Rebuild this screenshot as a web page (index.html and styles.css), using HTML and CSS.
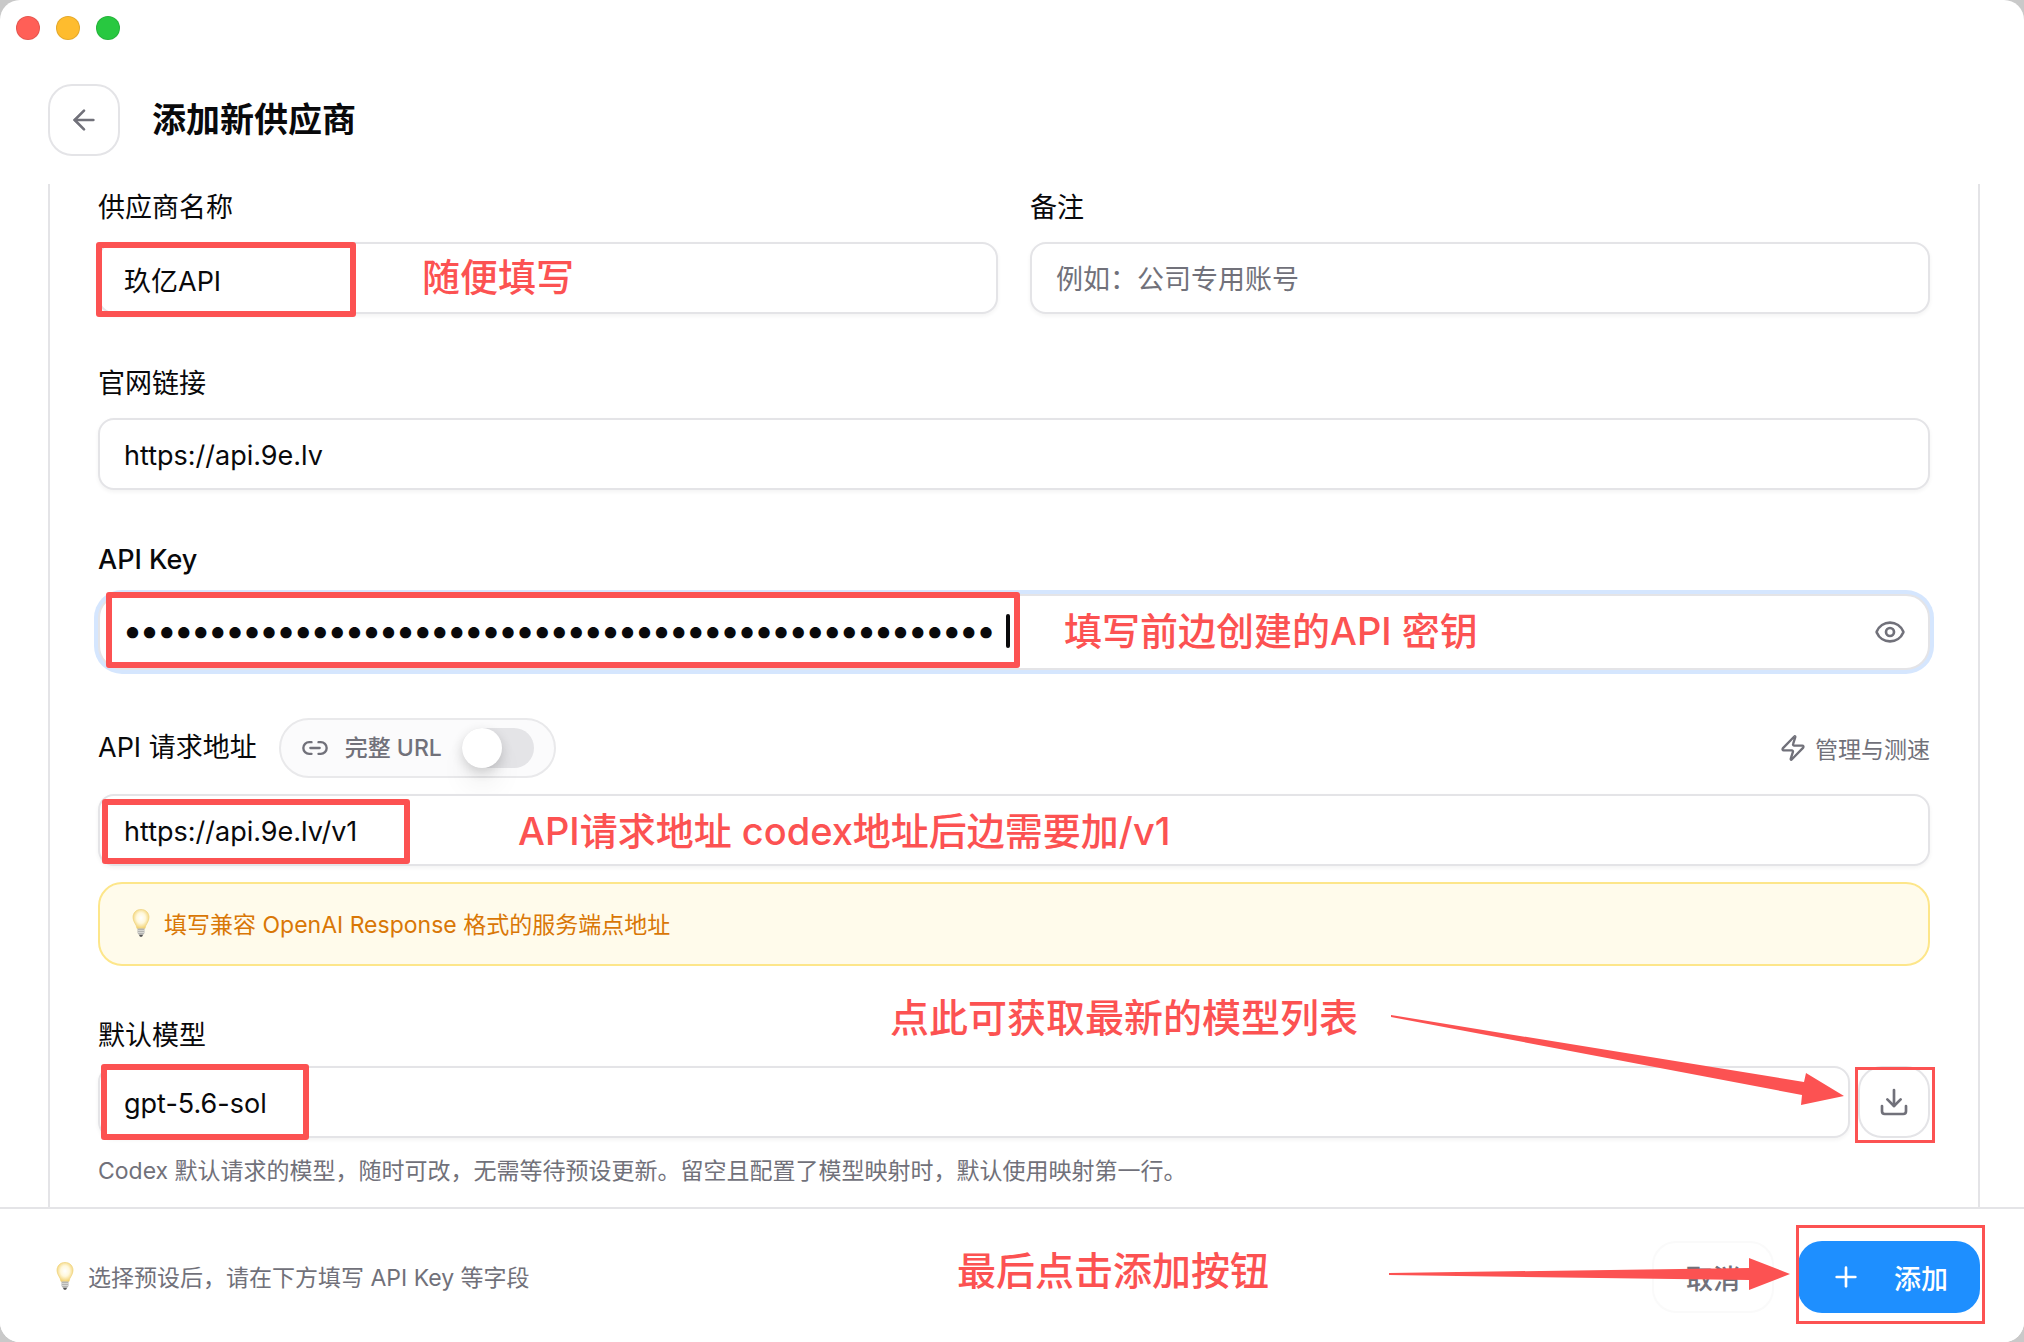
FILE: index.html
```
<!DOCTYPE html>
<html lang="zh-CN">
	<head>
		<meta charset="utf-8">
		<title>添加新供应商</title>
		<link rel="stylesheet" href="styles.css">
	</head>
	<body>
		<!-- 公用图标 -->
		<svg class="sprite" aria-hidden="true">
			<defs>
				<radialGradient id="glow" cx="50%" cy="45%" r="55%">
					<stop offset="0" stop-color="#ffffff"/>
					<stop offset="0.5" stop-color="#fff8dc"/>
					<stop offset="1" stop-color="#f3d272"/>
				</radialGradient>
			</defs>
			<symbol id="bulb" viewBox="0 0 18 28">
				<path d="M9 .5C4 .5 1 4 1 8.500C1 13 4.500 15 5 19.500H13C13.500 15 17 13 17 8.500C17 4 14 .5 9 .5Z" fill="url(#glow)" stroke="#f0d584" stroke-width=".8"/>
				<path d="M5.500 19.500h7v4.500l-1.500 2h-4l-1.500-2z" fill="#b4b4b2"/>
				<path d="M5.500 21.500h7M5.500 23.500h7" stroke="#dededb" stroke-width=".8"/>
				<path d="M7 26h4l-1 1.800h-2z" fill="#555"/>
			</symbol>
		</svg>
		<div class="window">
			<div class="titlebar">
				<span class="dot dot-red"></span>
				<span class="dot dot-yellow"></span>
				<span class="dot dot-green"></span>
			</div>
			<header class="header">
				<button type="button" class="btn-icon" aria-label="返回">
					<svg class="icon" viewBox="0 0 24 24"><path d="m12 19-7-7 7-7"/><path d="M19 12H5"/></svg>
				</button>
				<h1>添加新供应商</h1>
			</header>

			<form class="form" id="provider">
				<div class="row">
					<div class="field">
						<label for="name">供应商名称</label>
						<div class="control">
							<input type="text" id="name" value="玖亿API">
							<span class="mark mark-name"></span>
							<span class="note note-name">随便填写</span>
						</div>
					</div>
					<div class="field">
						<label for="remark">备注</label>
						<div class="control">
							<input type="text" id="remark" placeholder="例如：公司专用账号">
						</div>
					</div>
				</div>

				<div class="field">
					<label for="site">官网链接</label>
					<div class="control">
						<input type="text" id="site" value="https://api.9e.lv">
					</div>
				</div>

				<div class="field field-key">
					<label for="key">API Key</label>
					<div class="control">
						<input type="password" id="key" class="focus" value="123456789012345678901234567890123456789012345678901">
						<span class="caret"></span>
						<button type="button" class="btn-eye" aria-label="显示">
							<svg class="icon" viewBox="0 0 24 24"><path d="M2.062 12.348a1 1 0 0 1 0-.696 10.750 10.750 0 0 1 19.876 0 1 1 0 0 1 0 .696 10.750 10.750 0 0 1-19.876 0"/><circle cx="12" cy="12" r="3"/></svg>
						</button>
						<span class="mark mark-key"></span>
						<span class="note note-key">填写前边创建的API 密钥</span>
					</div>
				</div>

				<div class="field field-url">
					<div class="label-row">
						<label for="url">API 请求地址</label>
						<label class="pill" for="full">
							<svg class="icon icon-sm" viewBox="0 0 24 24"><path d="M9 17H7A5 5 0 0 1 7 7h2"/><path d="M15 7h2a5 5 0 1 1 0 10h-2"/><path d="M8 12h8"/></svg>
							完整 URL
							<input type="checkbox" id="full" class="switch">
						</label>
						<button type="button" class="btn-text">
							<svg class="icon icon-sm" viewBox="0 0 24 24"><path d="M4 14a1 1 0 0 1-.78-1.630l9.900-10.200a.5.5 0 0 1 .86.460l-1.920 6.020A1 1 0 0 0 13 10h7a1 1 0 0 1 .78 1.630l-9.900 10.200a.5.5 0 0 1-.86-.460l1.920-6.020A1 1 0 0 0 11 14z"/></svg>
							管理与测速
						</button>
					</div>
					<div class="control">
						<input type="text" id="url" value="https://api.9e.lv/v1">
						<span class="mark mark-url"></span>
						<span class="note note-url">API请求地址 codex地址后边需要加/v1</span>
					</div>
					<p class="tip"><svg class="bulb"><use href="#bulb"/></svg>填写兼容 OpenAI Response 格式的服务端点地址</p>
				</div>

				<div class="field field-model">
					<label for="model">默认模型</label>
					<div class="control model">
						<input type="text" id="model" value="gpt-5.6-sol">
						<button type="button" class="btn-icon" aria-label="获取模型列表">
							<svg class="icon" viewBox="0 0 24 24"><path d="M21 15v4a2 2 0 0 1-2 2H5a2 2 0 0 1-2-2v-4"/><path d="m7 10 5 5 5-5"/><path d="M12 15V3"/></svg>
						</button>
						<span class="mark mark-model"></span>
						<span class="mark mark-load"></span>
						<span class="note note-load">点此可获取最新的模型列表</span>
						<svg class="arrow arrow-load" viewBox="0 0 454 92"><path d="M0 0L413 67L415 58L453 81L410 90L411 80L0 2Z"/></svg>
					</div>
					<p class="desc">Codex 默认请求的模型，随时可改，无需等待预设更新。留空且配置了模型映射时，默认使用映射第一行。</p>
				</div>
			</form>

			<footer class="footer">
				<p class="foot-tip"><svg class="bulb"><use href="#bulb"/></svg>选择预设后，请在下方填写 API Key 等字段</p>
				<button type="button" class="btn btn-cancel">取消</button>
				<button type="submit" form="provider" class="btn btn-add">
					<svg class="icon" viewBox="0 0 24 24"><path d="M5 12h14"/><path d="M12 5v14"/></svg>
					添加
				</button>
				<span class="mark mark-add"></span>
				<span class="note note-add">最后点击添加按钮</span>
				<svg class="arrow arrow-add" viewBox="0 0 402 32"><path d="M0 15L360 10V0L401 16L360 32V22L0 17Z"/></svg>
			</footer>
		</div>
	</body>
</html>
```

FILE: styles.css
```
*{margin:0;padding:0;box-sizing:border-box;}
body{background:#c9c9c9;font-family:Inter,"Noto Sans CJK SC",sans-serif;font-size:27px;color:#09090b;}
input,button{font:inherit;color:inherit;}
button{background:none;border:none;cursor:pointer;}
.sprite{position:absolute;width:0;height:0;}

.window{display:flex;flex-direction:column;height:100vh;background:#fff;border-radius:20px;overflow:hidden;}
.titlebar{display:flex;gap:16px;padding:16px;}
.dot{width:24px;height:24px;border-radius:50%;border:1px solid rgba(0,0,0,.1);}
.dot-red{background:#ff5f57;}
.dot-yellow{background:#febc2e;}
.dot-green{background:#28c840;}

.header{display:flex;align-items:center;gap:32px;padding:28px 48px;}
.header h1{font-size:34px;font-weight:600;line-height:48px;}

.icon{display:block;width:32px;height:32px;fill:none;stroke:currentColor;stroke-width:2;stroke-linecap:round;stroke-linejoin:round;}
.icon-sm{width:28px;height:28px;}
.bulb{width:18px;height:28px;flex:none;}

.btn-icon{display:flex;align-items:center;justify-content:center;flex:none;width:72px;height:72px;border:2px solid #e4e4e7;border-radius:24px;color:#71717a;background:#fff;}

/* 表单 */
.form{flex:1;min-height:0;margin:0 44px 0 48px;padding:8px 48px 0;border:solid #e4e4e7;border-width:0 2px;}
.row{display:grid;grid-template-columns:1fr 1fr;gap:32px;}
.field{margin-bottom:54px;}
.field label{display:block;line-height:32px;}
.control{position:relative;margin-top:18px;}
.control input{display:block;width:100%;height:72px;padding:2px 24px 0;border:2px solid #e4e4e7;border-radius:16px;background:#fff;box-shadow:0 2px 4px rgba(0,0,0,.05);outline:none;}
.control input::placeholder{color:#71717a;opacity:1;}
.control input.focus{height:76px;padding:0 24px 4px;border-radius:24px;box-shadow:0 0 0 4px #d5e6fe;font-size:36px;font-weight:700;}
.caret{position:absolute;left:908px;top:20px;width:4px;height:34px;border-radius:2px;background:#09090b;}
.btn-eye{position:absolute;right:24px;top:22px;color:#71717a;}

.field-key{margin-bottom:48px;}
.field-key label{font-weight:500;}
.field-url{margin-bottom:54px;}
.label-row{display:flex;align-items:center;gap:22px;}
.field .pill{display:flex;align-items:center;gap:16px;height:60px;padding:0 20px;border:2px solid #e9e9eb;border-radius:30px;background:#fbfbfc;color:#71717a;font-size:23px;font-weight:500;}
.switch{appearance:none;width:72px;height:40px;margin-left:4px;border-radius:20px;background:#e4e4e7;}
.switch::before{content:"";display:block;width:40px;height:40px;border-radius:50%;background:#fff;box-shadow:0 20px 30px -6px rgba(0,0,0,.1),0 4px 12px rgba(0,0,0,.16);}
.btn-text{display:flex;align-items:center;gap:8px;margin-left:auto;color:#71717a;font-size:23px;}
.label-row + .control{margin-top:16px;}
.tip{display:flex;align-items:center;gap:14px;height:84px;margin-top:16px;padding:0 32px 2px;border:2px solid #fde68a;border-radius:24px;background:#fffbeb;color:#d97706;font-size:23px;}

.model{display:flex;gap:8px;}
.field-model .control{margin-top:14px;}
.desc{margin-top:17px;color:#71717a;font-size:23px;line-height:32px;}

/* 底部 */
.footer{position:relative;display:flex;align-items:center;gap:24px;padding:32px 44px 29px 56px;border-top:2px solid #e4e4e7;background:#fff;}
.foot-tip{display:flex;align-items:center;gap:14px;margin-right:auto;padding-bottom:2px;color:#71717a;font-size:23px;}
.btn{display:flex;align-items:center;gap:32px;height:72px;padding:0 32px;border-radius:24px;font-weight:500;}
.btn-cancel{border:2px solid #fafafa;color:#71717a;}
.btn-add{background:#1e8fff;color:#fff;}

/* 红色标注 */
.mark{position:absolute;border:6px solid #fc5252;border-radius:3px;pointer-events:none;}
.mark-name{left:-2px;top:0;width:260px;height:75px;}
.mark-key{left:8px;top:-2px;width:914px;height:76px;}
.mark-url{left:4px;top:5px;width:308px;height:65px;}
.mark-model{left:3px;top:-2px;width:208px;height:76px;}
.mark-load{right:-5px;top:1px;width:80px;height:76px;border-width:3px;border-radius:0;}
.mark-add{right:39px;top:16px;width:189px;height:99px;border-width:3px;border-radius:0;}
.note{position:absolute;color:#fc5252;font-size:38px;font-weight:500;line-height:48px;white-space:nowrap;pointer-events:none;}
.note-name{left:324px;top:11px;}
.note-key{left:966px;top:13px;}
.note-url{left:420px;top:13px;}
.note-load,.note-add{font-size:39px;}
.note-load{right:572px;top:-72px;}
.note-add{right:755px;top:38px;}
.arrow{position:absolute;fill:#fc5252;pointer-events:none;}
.arrow-load{right:85px;top:-51px;width:454px;height:92px;}
.arrow-add{right:233px;top:49px;width:402px;height:32px;}
```
